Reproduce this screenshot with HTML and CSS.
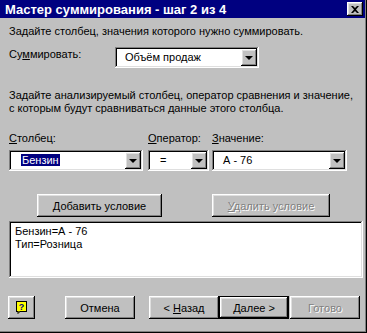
FILE: index.html
```html
<html>
  <head>
    <title>Мастер суммирования</title>
    <link rel="stylesheet" href="styles.css">
  </head>
  <body>
    <div class="window">
      <div class="titlebar">
        <span class="title">Мастер суммирования - шаг 2 из 4</span>
        <span class="close raised">
          <svg width="8" height="7" viewBox="0 0 8 7"><path d="M0 0h2l2 2 2-2h2L5 3.5 8 7H6L4 5 2 7H0l3-3.5z" fill="#000"/></svg>
        </span>
      </div>

      <div class="content">
        <p class="line">Задайте столбец, значения которого нужно суммировать.</p>

        <div class="sum-row">
          <span class="sum-label">Су<u>м</u>мировать:</span>
          <div class="combo sum-combo">
            <span class="value">Объём продаж</span>
            <span class="drop raised"><i class="arrow"></i></span>
          </div>
        </div>

        <p class="para">Задайте анализируемый столбец, оператор сравнения и значение,<br>с которым будут сравниваться данные этого столбца.</p>

        <div class="criteria">
          <div class="field">
            <span class="field-label"><u>С</u>толбец:</span>
            <div class="combo">
              <span class="value col-value"><span class="selected">Бензин</span></span>
              <span class="drop raised"><i class="arrow"></i></span>
            </div>
          </div>
          <div class="field">
            <span class="field-label"><u>О</u>ператор:</span>
            <div class="combo">
              <span class="value op-value">=</span>
              <span class="drop raised"><i class="arrow"></i></span>
            </div>
          </div>
          <div class="field">
            <span class="field-label"><u>З</u>начение:</span>
            <div class="combo">
              <span class="value val-value">А - 76</span>
              <span class="drop raised"><i class="arrow"></i></span>
            </div>
          </div>
        </div>

        <div class="cond-buttons">
          <span class="btn raised add-btn"><span><u>Д</u>обавить условие</span></span>
          <span class="btn raised del-btn disabled"><span><u>У</u>далить условие</span></span>
        </div>

        <div class="list">
          <div class="list-item">Бензин=А - 76</div>
          <div class="list-item">Тип=Розница</div>
        </div>

        <div class="footer">
          <span class="btn raised help-btn">
            <svg width="11" height="13" viewBox="0 0 11 13">
              <rect x="0.5" y="0.5" width="10" height="10" fill="#ffff00" stroke="#000"/>
              <path d="M2 10.5v2l2-2" fill="#ffff00" stroke="#000"/>
              <text x="5.5" y="9" font-size="9" font-weight="bold" text-anchor="middle" fill="#000080" font-family="Liberation Sans, sans-serif">?</text>
            </svg>
          </span>
          <span class="btn raised cancel-btn">Отмена</span>
          <span class="btn raised back-btn"><span>&lt; <u>Н</u>азад</span></span>
          <span class="btn default next-btn">Далее &gt;</span>
          <span class="btn raised finish-btn disabled">Готово</span>
        </div>
      </div>
    </div>
  </body>
</html>
```

FILE: styles.css
```css
body {
  margin: 0;
  font-family: 'Liberation Sans', Arial, sans-serif;
  font-size: 11px;
  color: #000;
  background-color: #c0c0c0;
}

.window {
  width: 367px;
  height: 333px;
  box-sizing: border-box;
  padding: 0 2px 2px 0;
  background-color: #c0c0c0;
  box-shadow: inset -1px -1px #000, inset -2px -2px #808080;
}

.raised {
  box-shadow: inset -1px -1px #000, inset 1px 1px #fff, inset -2px -2px #808080, inset 2px 2px #dfdfdf;
  background-color: #c0c0c0;
}

.titlebar {
  height: 18px;
  background-color: #000080;
  display: flex;
  align-items: center;
  justify-content: space-between;
  padding: 0 2px 0 5px;
}

.title {
  color: #fff;
  font-weight: bold;
  font-size: 13px;
}

.close {
  width: 16px;
  height: 14px;
  display: flex;
  align-items: center;
  justify-content: center;
}

.content {
  padding: 7px 0 0 9px;
}

p {
  margin: 0;
  line-height: 13px;
}

.sum-row {
  display: flex;
  margin-top: 9px;
}

.sum-label {
  width: 106px;
  padding-top: 1px;
  line-height: 13px;
}

.combo {
  height: 21px;
  box-sizing: border-box;
  background-color: #fff;
  box-shadow: inset -1px -1px #fff, inset 1px 1px #808080, inset -2px -2px #dfdfdf, inset 2px 2px #000;
  display: flex;
  align-items: center;
  justify-content: space-between;
  padding: 2px;
}

.sum-combo {
  width: 144px;
}

.value {
  padding-left: 8px;
  line-height: 13px;
}

.drop {
  width: 16px;
  height: 17px;
  display: flex;
  align-items: center;
  justify-content: center;
}

.arrow {
  width: 0;
  height: 0;
  border-left: 4px solid transparent;
  border-right: 4px solid transparent;
  border-top: 4px solid #000;
  margin-top: 1px;
}

.para {
  margin-top: 21px;
}

.criteria {
  display: grid;
  grid-template-columns: 134px 61px 133px;
  column-gap: 5px;
  margin-top: 17px;
}

.criteria .field:last-child {
  margin-left: -2px;
}

.field-label {
  display: block;
  line-height: 13px;
  margin-bottom: 5px;
}

.col-value {
  padding-left: 10px;
}

.selected {
  background-color: #000080;
  color: #fff;
  padding: 0 1px;
}

.op-value {
  padding-left: 10px;
}

.val-value {
  padding-left: 9px;
}

.btn {
  height: 23px;
  box-sizing: border-box;
  display: inline-flex;
  align-items: center;
  justify-content: center;
}

.disabled {
  color: #808080;
  text-shadow: 1px 1px #fff;
}

.cond-buttons {
  display: flex;
  margin-top: 23px;
}

.add-btn {
  width: 125px;
  margin-left: 28px;
}

.del-btn {
  width: 118px;
  margin-left: 50px;
}

.list {
  width: 354px;
  height: 57px;
  box-sizing: border-box;
  margin-top: 4px;
  background-color: #fff;
  box-shadow: inset -1px -1px #fff, inset 1px 1px #808080, inset -2px -2px #dfdfdf, inset 2px 2px #000;
  padding: 4px 6px;
}

.list-item {
  line-height: 13px;
}

.footer {
  display: flex;
  margin-top: 18px;
  margin-left: -1px;
}

.help-btn {
  width: 27px;
}

.cancel-btn {
  width: 70px;
  margin-left: 30px;
}

.back-btn {
  width: 70px;
  margin-left: 14px;
}

.next-btn {
  width: 70px;
  box-shadow: inset -1px -1px #000, inset 1px 1px #000, inset -2px -2px #000, inset 2px 2px #fff, inset -3px -3px #808080, inset 3px 3px #dfdfdf;
  background-color: #c0c0c0;
}

.finish-btn {
  width: 70px;
  margin-left: 1px;
}
```
